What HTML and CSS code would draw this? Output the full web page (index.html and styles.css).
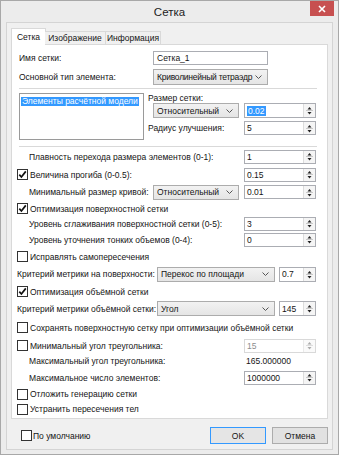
FILE: index.html
```html
<!DOCTYPE html>
<html lang="ru">
<head>
<meta charset="utf-8">
<title>Сетка</title>
<link rel="stylesheet" href="styles.css">
</head>
<body>
<div class="window">
  <div class="titlebar">
    <span class="title">Сетка</span>
    <div class="close"><svg width="8" height="8" viewBox="0 0 8 8"><path d="M1 1L7 7M7 1L1 7" stroke="#fff" stroke-width="1.6"/></svg></div>
  </div>
  <div class="client">
    <div class="tabs">
      <div class="tab active">Сетка</div>
      <div class="tab t2">Изображение</div>
      <div class="tab t3">Информация</div>
    </div>
    <div class="panel">
      <div class="row h17">
        <span class="lbl w136 in2">Имя сетки:</span>
        <div class="input w115">Сетка_1</div>
      </div>
      <div class="row h22">
        <span class="lbl w136 in2">Основной тип элемента:</span>
        <div class="select w115 sh16"><span class="stext tight">Криволинейный тетраэдр</span><svg class="chev" width="7" height="4" viewBox="0 0 7 4"><path d="M0.5 0.5L3.5 3.5L6.5 0.5" fill="none" stroke="#555" stroke-width="1"/></svg></div>
      </div>
      <div class="sep"></div>
      <div class="group">
        <div class="listbox"><span class="item">Элементы расчётной модели</span></div>
        <div class="gright">
          <div class="glabel">Размер сетки:</div>
          <div class="grow1">
            <div class="select w86 sh15 ml5"><span class="stext">Относительный</span><svg class="chev" width="7" height="4" viewBox="0 0 7 4"><path d="M0.5 0.5L3.5 3.5L6.5 0.5" fill="none" stroke="#555" stroke-width="1"/></svg></div>
            <div class="spin sh15"><span class="val"><span class="hl">0.02</span></span><span class="arrows"><svg width="9" height="11" viewBox="0 0 9 11"><path d="M4.5 2L2.5 4.5H6.5Z" fill="#222"/><path d="M1 5.5H8" stroke="#c8c8c8" stroke-width="1"/><path d="M2.5 7H6.5L4.5 9.5Z" fill="#222"/></svg></span></div>
          </div>
          <div class="grow2">
            <span class="lbl">Радиус улучшения:</span>
            <div class="spin"><span class="val">5</span><span class="arrows"><svg width="9" height="11" viewBox="0 0 9 11"><path d="M4.5 2L2.5 4.5H6.5Z" fill="#222"/><path d="M1 5.5H8" stroke="#c8c8c8" stroke-width="1"/><path d="M2.5 7H6.5L4.5 9.5Z" fill="#222"/></svg></span></div>
          </div>
        </div>
      </div>
      <div class="sep sep2"></div>

      <div class="row h19">
        <span class="lbl in12">Плавность перехода размера элементов (0-1):</span>
        <div class="spin"><span class="val">1</span><span class="arrows"><svg width="9" height="11" viewBox="0 0 9 11"><path d="M4.5 2L2.5 4.5H6.5Z" fill="#222"/><path d="M1 5.5H8" stroke="#c8c8c8" stroke-width="1"/><path d="M2.5 7H6.5L4.5 9.5Z" fill="#222"/></svg></span></div>
      </div>
      <div class="row h17">
        <span class="cb"><svg width="9" height="9" viewBox="0 0 9 9"><path d="M1.3 4.6L3.4 7L7.8 1.4" fill="none" stroke="#111" stroke-width="1.7"/></svg></span>
        <span class="lbl">Величина прогиба (0-0.5):</span>
        <div class="spin"><span class="val">0.15</span><span class="arrows"><svg width="9" height="11" viewBox="0 0 9 11"><path d="M4.5 2L2.5 4.5H6.5Z" fill="#222"/><path d="M1 5.5H8" stroke="#c8c8c8" stroke-width="1"/><path d="M2.5 7H6.5L4.5 9.5Z" fill="#222"/></svg></span></div>
      </div>
      <div class="row h18">
        <span class="lbl w136 in12">Минимальный размер кривой:</span>
        <div class="select w86 sh15"><span class="stext">Относительный</span><svg class="chev" width="7" height="4" viewBox="0 0 7 4"><path d="M0.5 0.5L3.5 3.5L6.5 0.5" fill="none" stroke="#555" stroke-width="1"/></svg></div>
        <div class="spin"><span class="val">0.01</span><span class="arrows"><svg width="9" height="11" viewBox="0 0 9 11"><path d="M4.5 2L2.5 4.5H6.5Z" fill="#222"/><path d="M1 5.5H8" stroke="#c8c8c8" stroke-width="1"/><path d="M2.5 7H6.5L4.5 9.5Z" fill="#222"/></svg></span></div>
      </div>
      <div class="row h15">
        <span class="cb"><svg width="9" height="9" viewBox="0 0 9 9"><path d="M1.3 4.6L3.4 7L7.8 1.4" fill="none" stroke="#111" stroke-width="1.7"/></svg></span>
        <span class="lbl">Оптимизация поверхностной сетки</span>
      </div>
      <div class="row h15">
        <span class="lbl in12">Уровень сглаживания поверхностной сетки (0-5):</span>
        <div class="spin"><span class="val">3</span><span class="arrows"><svg width="9" height="11" viewBox="0 0 9 11"><path d="M4.5 2L2.5 4.5H6.5Z" fill="#222"/><path d="M1 5.5H8" stroke="#c8c8c8" stroke-width="1"/><path d="M2.5 7H6.5L4.5 9.5Z" fill="#222"/></svg></span></div>
      </div>
      <div class="row h17">
        <span class="lbl in12">Уровень уточнения тонких объемов (0-4):</span>
        <div class="spin"><span class="val">0</span><span class="arrows"><svg width="9" height="11" viewBox="0 0 9 11"><path d="M4.5 2L2.5 4.5H6.5Z" fill="#222"/><path d="M1 5.5H8" stroke="#c8c8c8" stroke-width="1"/><path d="M2.5 7H6.5L4.5 9.5Z" fill="#222"/></svg></span></div>
      </div>
      <div class="row h17">
        <span class="cb"></span>
        <span class="lbl">Исправлять самопересечения</span>
      </div>
      <div class="row h18">
        <span class="lbl w140">Критерий метрики на поверхности:</span>
        <div class="select w118 sh15"><span class="stext">Перекос по площади</span><svg class="chev" width="7" height="4" viewBox="0 0 7 4"><path d="M0.5 0.5L3.5 3.5L6.5 0.5" fill="none" stroke="#555" stroke-width="1"/></svg></div>
        <div class="spin w37 sh15"><span class="val">0.7</span><span class="arrows"><svg width="9" height="11" viewBox="0 0 9 11"><path d="M4.5 2L2.5 4.5H6.5Z" fill="#222"/><path d="M1 5.5H8" stroke="#c8c8c8" stroke-width="1"/><path d="M2.5 7H6.5L4.5 9.5Z" fill="#222"/></svg></span></div>
      </div>
      <div class="row h17">
        <span class="cb"><svg width="9" height="9" viewBox="0 0 9 9"><path d="M1.3 4.6L3.4 7L7.8 1.4" fill="none" stroke="#111" stroke-width="1.7"/></svg></span>
        <span class="lbl">Оптимизация объёмной сетки</span>
      </div>
      <div class="row h17">
        <span class="lbl w140">Критерий метрики объёмной сетки:</span>
        <div class="select w118 sh15"><span class="stext">Угол</span><svg class="chev" width="7" height="4" viewBox="0 0 7 4"><path d="M0.5 0.5L3.5 3.5L6.5 0.5" fill="none" stroke="#555" stroke-width="1"/></svg></div>
        <div class="spin w37 sh15"><span class="val">145</span><span class="arrows"><svg width="9" height="11" viewBox="0 0 9 11"><path d="M4.5 2L2.5 4.5H6.5Z" fill="#222"/><path d="M1 5.5H8" stroke="#c8c8c8" stroke-width="1"/><path d="M2.5 7H6.5L4.5 9.5Z" fill="#222"/></svg></span></div>
      </div>
      <div class="row h21">
        <span class="cb"></span>
        <span class="lbl">Сохранять поверхностную сетку при оптимизации объёмной сетки</span>
      </div>
      <div class="row h15">
        <span class="cb"></span>
        <span class="lbl">Минимальный угол треугольника:</span>
        <div class="spin disabled"><span class="val">15</span><span class="arrows"><svg width="9" height="11" viewBox="0 0 9 11"><path d="M4.5 2L2.5 4.5H6.5Z" fill="#aaa"/><path d="M1 5.5H8" stroke="#dedede" stroke-width="1"/><path d="M2.5 7H6.5L4.5 9.5Z" fill="#aaa"/></svg></span></div>
      </div>
      <div class="row h16">
        <span class="lbl in12">Максимальный угол треугольника:</span>
        <span class="plainval">165.000000</span>
      </div>
      <div class="row h17">
        <span class="lbl in12">Максимальное число элементов:</span>
        <div class="spin"><span class="val">1000000</span><span class="arrows"><svg width="9" height="11" viewBox="0 0 9 11"><path d="M4.5 2L2.5 4.5H6.5Z" fill="#222"/><path d="M1 5.5H8" stroke="#c8c8c8" stroke-width="1"/><path d="M2.5 7H6.5L4.5 9.5Z" fill="#222"/></svg></span></div>
      </div>
      <div class="row h16">
        <span class="cb"></span>
        <span class="lbl">Отложить генерацию сетки</span>
      </div>
      <div class="row h14">
        <span class="cb"></span>
        <span class="lbl">Устранить пересечения тел</span>
      </div>
    </div>
    <div class="footer">
      <span class="cb fcb"></span>
      <span class="lbl">По умолчанию</span>
      <div class="btn ok">OK</div>
      <div class="btn cancel">Отмена</div>
    </div>
  </div>
</div>
</body>
</html>
```

FILE: styles.css
```css
* { box-sizing: border-box; }
html, body { margin: 0; padding: 0; }
body {
  width: 339px;
  height: 455px;
  overflow: hidden;
  background: #fff;
  font-family: "Liberation Sans", Arial, sans-serif;
  font-size: 8.5px;
  color: #141414;
}
.window {
  width: 339px;
  height: 455px;
  border: 1px solid #a8a8a8;
  background: #ececec;
  padding: 0 5px 4px 5px;
  display: flex;
  flex-direction: column;
}
.titlebar {
  height: 21px;
  flex: none;
  position: relative;
  display: flex;
  align-items: center;
  justify-content: center;
}
.title {
  font-size: 11.5px;
  color: #222;
  padding-top: 1px;
}
.close {
  position: absolute;
  right: -1px;
  top: 0;
  width: 24px;
  height: 15px;
  background: #c75050;
  display: flex;
  align-items: center;
  justify-content: center;
}
.client {
  flex: 1;
  border: 1px solid #d4d4d4;
  background: #f0f0f0;
  padding: 5px 4px 0 4px;
  display: flex;
  flex-direction: column;
}
.tabs {
  height: 17px;
  flex: none;
  display: flex;
  align-items: flex-end;
  margin-bottom: -1px;
  position: relative;
  z-index: 1;
}
.tab {
  height: 14px;
  border: 1px solid #d9d9d9;
  background: #f0f0f0;
  display: flex;
  align-items: center;
  justify-content: center;
  white-space: nowrap;
}
.tab.active {
  width: 35px;
  height: 17px;
  background: #fff;
  border-bottom: none;
}
.tab.t2 { width: 61px; margin-left: -1px; border-left: none; }
.tab.t3 { width: 56px; margin-left: -1px; }
.panel {
  height: 375px;
  flex: none;
  border: 1px solid #d9d9d9;
  background: #fff;
  padding: 4px 11px 0 5px;
}
.row {
  display: flex;
  align-items: center;
  white-space: nowrap;
}
.h14 { height: 14px; }
.h15 { height: 15px; }
.h16 { height: 16px; }
.h17 { height: 17px; }
.h18 { height: 18px; }
.h19 { height: 19px; }
.h21 { height: 21px; }
.h22 { height: 22px; }
.lbl { white-space: nowrap; }
.in2 { padding-left: 2px; }
.in12 { padding-left: 12px; }
.w136 { width: 136px; flex: none; }
.w140 { width: 140px; flex: none; }
.input {
  height: 14px;
  border: 1px solid #abadb3;
  background: #fff;
  padding-left: 3px;
  display: flex;
  align-items: center;
}
.w115 { width: 115px; }
.w86 { width: 86px; }
.w118 { width: 118px; }
.w37 { width: 37px !important; }
.ml5 { margin-left: 5px; }
.select {
  border: 1px solid #acacac;
  background: linear-gradient(#f2f2f2, #e5e5e5);
  display: flex;
  align-items: center;
  padding-left: 3px;
  padding-right: 5px;
  flex: none;
}
.sh15 { height: 15px !important; }
.sh16 { height: 16px; }
.stext {
  flex: 1;
  overflow: hidden;
  white-space: nowrap;
}
.tight { letter-spacing: -0.25px; }
.chev { flex: none; margin-left: 2px; }
.sep {
  height: 1px;
  background: #d9d9d9;
  margin-left: 2px;
  width: 298px;
}
.sep2 { margin-top: 6px; }
.group {
  display: flex;
  margin-top: 4px;
  height: 47px;
}
.listbox {
  margin-left: 2px;
  width: 125px;
  height: 47px;
  border: 1px solid #9a9a9a;
  background: #fff;
  padding: 2px 0 0 1px;
  flex: none;
}
.item {
  display: inline-block;
  background: #3399ff;
  color: #fff;
  height: 9px;
  line-height: 9px;
  padding: 0 1px;
  white-space: nowrap;
}
.gright {
  flex: 1;
  margin-left: 4px;
  display: flex;
  flex-direction: column;
}
.glabel {
  height: 10px;
  line-height: 10px;
}
.grow1 {
  display: flex;
  align-items: center;
  height: 15px;
}
.grow2 {
  display: flex;
  align-items: center;
  height: 18px;
  margin-top: 1px;
}
.spin {
  width: 72px;
  height: 14px;
  margin-left: auto;
  border: 1px solid #abadb3;
  background: #fff;
  display: flex;
  align-items: stretch;
  flex: none;
}
.spin .val {
  flex: 1;
  padding-left: 2px;
  display: flex;
  align-items: center;
  overflow: hidden;
}
.spin .arrows {
  width: 12px;
  flex: none;
  border-left: 1px solid #dcdcdc;
  background: #f5f5f5;
  display: flex;
  align-items: center;
  justify-content: center;
}
.hl {
  background: #3399ff;
  color: #fff;
  line-height: 10px;
  padding: 0 1px;
}
.spin.disabled { border-color: #d9d9d9; color: #8d8d8d; }
.spin.disabled .arrows { border-left-color: #eaeaea; background: #fafafa; }
.plainval {
  margin-left: auto;
  width: 72px;
  padding-left: 2px;
}
.cb {
  width: 11px;
  height: 11px;
  border: 1px solid #333;
  background: #fff;
  flex: none;
  margin-right: 2px;
  display: flex;
  align-items: center;
  justify-content: center;
}
.footer {
  display: flex;
  align-items: center;
  height: 17px;
  margin-top: 8px;
}
.fcb { margin-left: 10px; margin-right: 1px; }
.btn {
  width: 56px;
  height: 17px;
  border: 1px solid #acacac;
  background: #e1e1e1;
  display: flex;
  align-items: center;
  justify-content: center;
  flex: none;
}
.btn.ok {
  margin-left: auto;
  border-color: #3399ff;
  background: #e5e5e5;
}
.btn.cancel { margin-left: 6px; }
```
